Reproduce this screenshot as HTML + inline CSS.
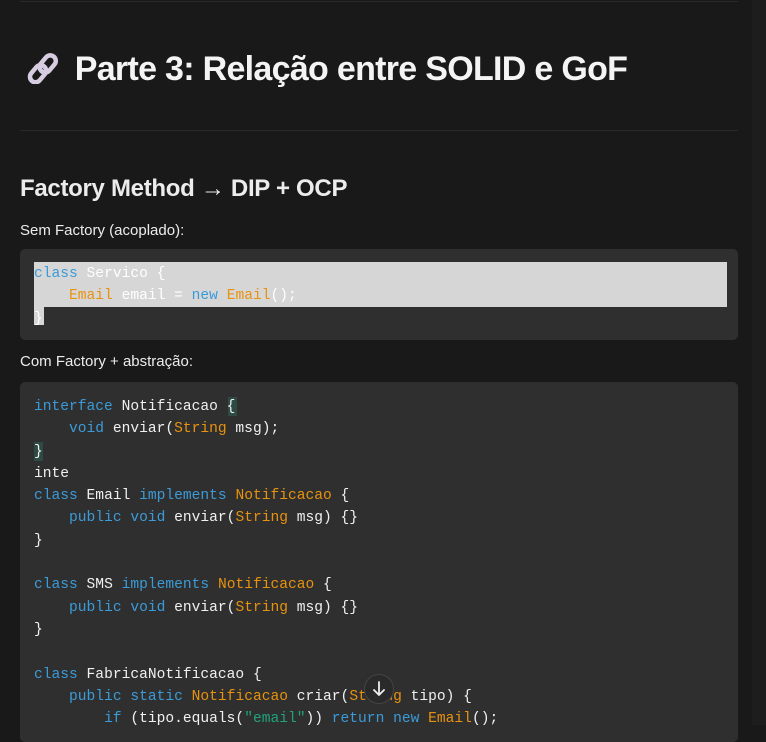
<!DOCTYPE html>
<html><head><style>
body{margin:0;width:766px;height:725px;overflow:hidden;background:#191919;font-family:"Liberation Sans",sans-serif;color:#ececec;position:relative}
.sb{position:absolute;right:0;top:0;width:14px;height:725px;background:#1d1d1d}
.hr{position:absolute;left:20px;width:718px;height:1px;background:#2a2a2a}
h1{position:absolute;left:26px;top:50px;margin:0;font-size:34px;font-weight:bold;letter-spacing:-0.7px;color:#f4f4f4}
h2{position:absolute;left:20px;top:175px;margin:0;font-size:24px;font-weight:bold;letter-spacing:-0.3px}
p{position:absolute;left:20px;margin:0;font-size:15px}
.code{position:absolute;left:20px;width:718px;background:#2f2f2f;border-radius:5px}
pre{margin:0;font-family:"Liberation Mono",monospace;font-size:14.6px;line-height:22.3px;color:#f0f0f0;position:absolute;left:14px}
.k{color:#3b9bd8}.t{color:#e8920f}.s{color:#1fa37a}
.sel{position:absolute;background:#d6d6d6}
</style></head><body>
<div class="sb"></div>
<div class="hr" style="top:1px"></div>
<h1><svg width="40" height="32" viewBox="0 0 40 32" style="vertical-align:-4px"><g fill="none" stroke="#d8cde0" stroke-width="4.5"><rect x="16" y="2" width="11" height="19" rx="5.5" transform="rotate(40 21 12)"/><rect x="7" y="12" width="11" height="19" rx="5.5" transform="rotate(40 12 21)"/></g></svg> Parte 3: Relação entre SOLID e GoF</h1>
<div class="hr" style="top:130px"></div>
<h2>Factory Method → DIP + OCP</h2>
<p style="top:222px">Sem Factory (acoplado):</p>
<div class="code" style="top:249px;height:91px">
<div class="sel" style="left:14px;top:13px;width:693px;height:45px"></div>
<div class="sel" style="left:14px;top:58px;width:10px;height:18px"></div>
<pre style="top:14px;color:#fff"><span class="k">class</span> Servico {
    <span class="t">Email</span> email = <span class="k">new</span> <span class="t">Email</span>();
}</pre>
</div>
<p style="top:353px">Com Factory + abstração:</p>
<div class="code" style="top:382px;height:360px">
<div style="position:absolute;left:208px;top:15px;width:9px;height:19px;background:#2d4a44"></div>
<div style="position:absolute;left:14px;top:60px;width:9px;height:19px;background:#2d4a44"></div>
<pre style="top:14px"><span class="k">interface</span> Notificacao {
    <span class="k">void</span> enviar(<span class="t">String</span> msg);
}
inte
<span class="k">class</span> Email <span class="k">implements</span> <span class="t">Notificacao</span> {
    <span class="k">public</span> <span class="k">void</span> enviar(<span class="t">String</span> msg) {}
}

<span class="k">class</span> SMS <span class="k">implements</span> <span class="t">Notificacao</span> {
    <span class="k">public</span> <span class="k">void</span> enviar(<span class="t">String</span> msg) {}
}

<span class="k">class</span> FabricaNotificacao {
    <span class="k">public</span> <span class="k">static</span> <span class="t">Notificacao</span> criar(<span class="t">String</span> tipo) {
        <span class="k">if</span> (tipo.equals(<span class="s">"email"</span>)) <span class="k">return</span> <span class="k">new</span> <span class="t">Email</span>();</pre>
</div>
<div style="position:absolute;left:364px;top:674px;width:30px;height:30px;border-radius:50%;background:#2a2a2a;border:1px solid #444;box-sizing:border-box">
<svg width="28" height="28" viewBox="0 0 28 28"><path d="M14 7v13M9 15l5 5 5-5" stroke="#eee" stroke-width="1.8" fill="none" stroke-linecap="round" stroke-linejoin="round"/></svg></div>
</body></html>
